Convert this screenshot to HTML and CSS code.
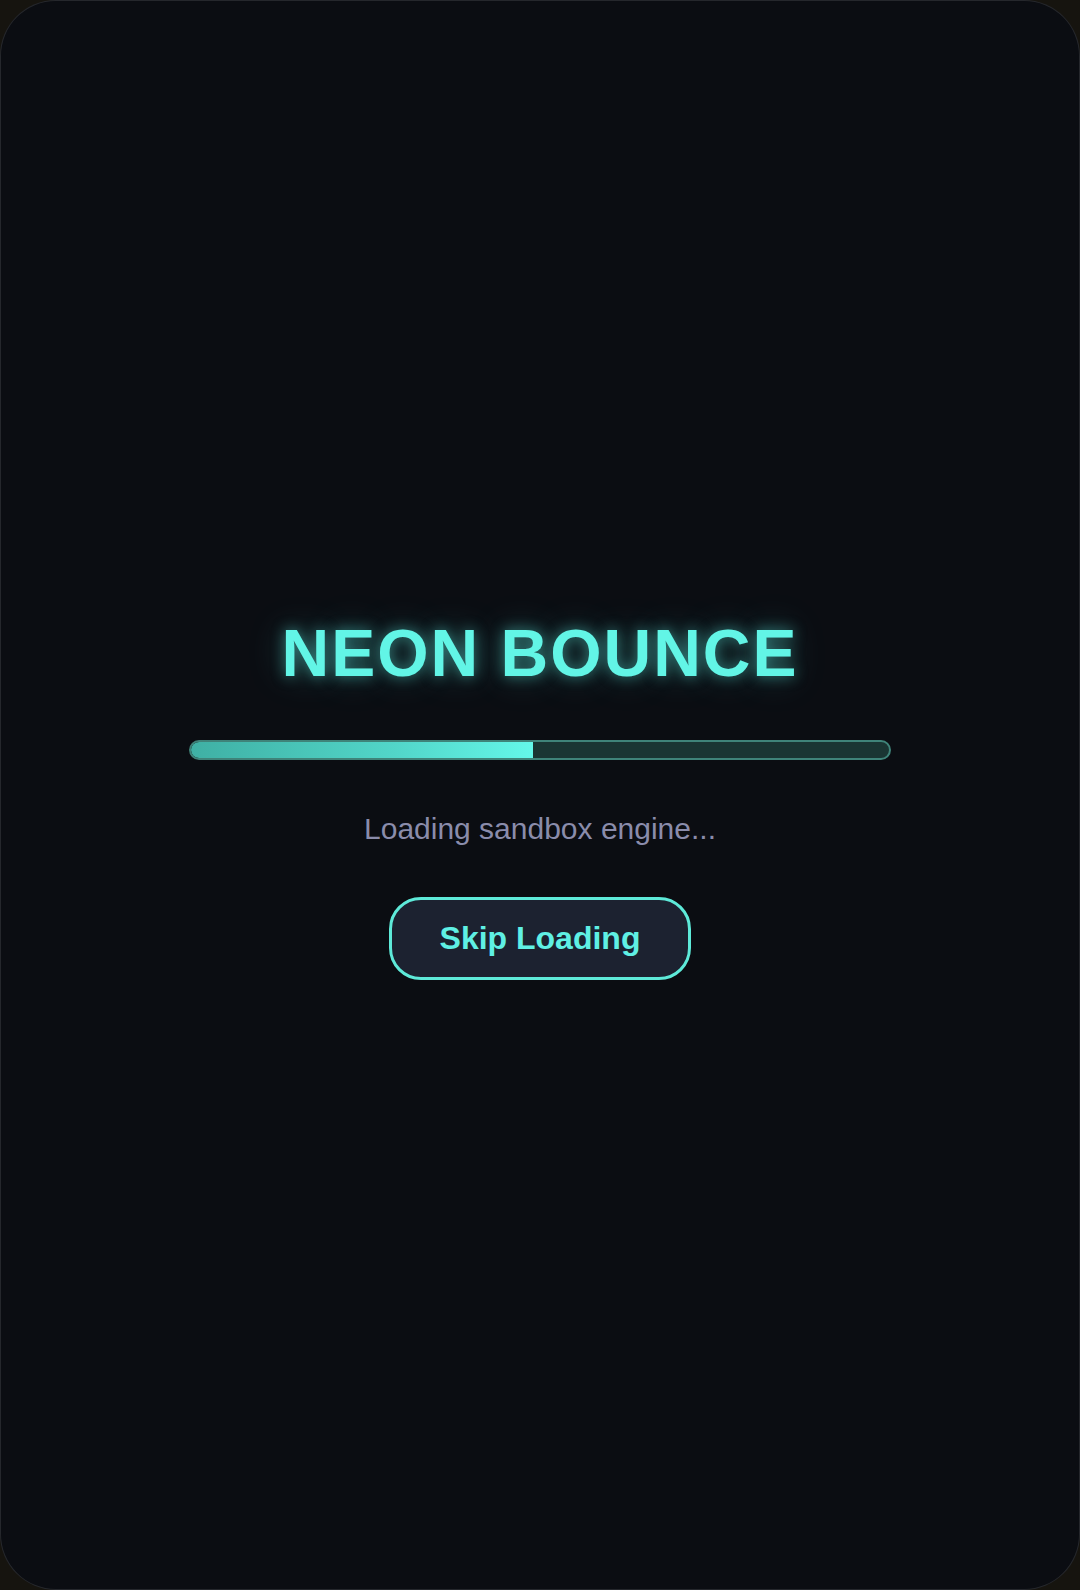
FILE: index.html
```html
<!DOCTYPE html>
<html lang="en">
<head>
<meta charset="utf-8">
<title>Neon Bounce</title>
<link rel="stylesheet" href="styles.css">
</head>
<body>
<div class="screen">
  <div class="loader">
    <h1 class="title">NEON BOUNCE</h1>
    <div class="bar"><div class="bar-fill" style="width: 49%"></div></div>
    <p class="status">Loading sandbox engine...</p>
    <button class="skip" type="button">Skip Loading</button>
  </div>
</div>
</body>
</html>
```

FILE: styles.css
```css
html, body {
  margin: 0;
  padding: 0;
}
body {
  background: #16140f;
  width: 1080px;
  height: 1590px;
  overflow: hidden;
  font-family: "Liberation Sans", Arial, sans-serif;
}
.screen {
  box-sizing: border-box;
  width: 1080px;
  height: 1590px;
  border: 1.5px solid rgba(255, 255, 255, 0.11);
  border-radius: 56px;
  background: #0b0d12;
  display: flex;
  align-items: center;
  justify-content: center;
}
.loader {
  display: flex;
  flex-direction: column;
  align-items: center;
  padding-top: 4px;
}
.title {
  margin: 0;
  font-size: 66px;
  line-height: 78px;
  font-weight: 700;
  letter-spacing: 2px;
  color: #62f5e6;
  text-shadow: 0 0 14px rgba(94, 242, 230, 0.5), 0 0 36px rgba(94, 242, 230, 0.28);
}
.bar {
  box-sizing: border-box;
  margin-top: 48px;
  width: 702px;
  height: 20px;
  border: 2px solid #3f8379;
  border-radius: 10px;
  background: #1a3533;
  overflow: hidden;
}
.bar-fill {
  height: 100%;
  background: linear-gradient(90deg, #3fb0a4 0%, #52d6c9 60%, #64f7e9 100%);
  border-radius: 8px 0 0 8px;
}
.status {
  margin: 51px 0 0;
  font-size: 30px;
  line-height: 36px;
  color: #8a8cab;
}
.skip {
  margin-top: 50px;
  box-sizing: border-box;
  padding: 20px 48px;
  border: 3px solid #5eead9;
  border-radius: 32px;
  background: #1c2230;
  color: #5ff0e4;
  font-family: "Liberation Sans", Arial, sans-serif;
  font-size: 32px;
  line-height: 37px;
  font-weight: 700;
}
```
